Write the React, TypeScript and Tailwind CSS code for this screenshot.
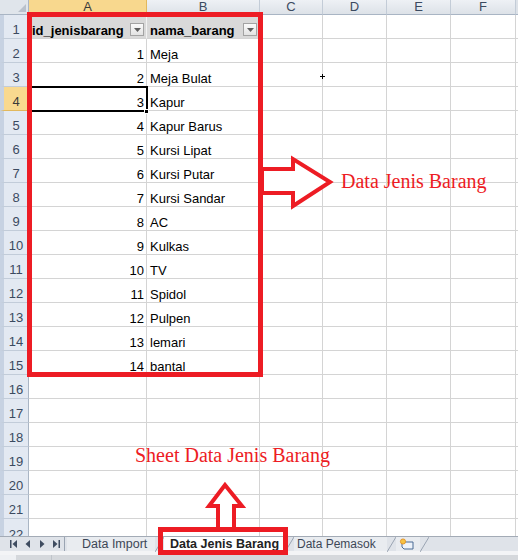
import React from "react";

const cols = [
  { id: "A", w: "w-[118px]" },
  { id: "B", w: "w-[113px]" },
  { id: "C", w: "w-[63px]" },
  { id: "D", w: "w-[64px]" },
  { id: "E", w: "w-[64px]" },
  { id: "F", w: "w-[65px]" },
];

const barang = [
  "Meja",
  "Meja Bulat",
  "Kapur",
  "Kapur Barus",
  "Kursi Lipat",
  "Kursi Putar",
  "Kursi Sandar",
  "AC",
  "Kulkas",
  "TV",
  "Spidol",
  "Pulpen",
  "lemari",
  "bantal",
];

const FilterButton = () => (
  <div className="absolute right-[2px] bottom-[2px] w-[14px] h-[13px] border border-[#a3a3a3] bg-gradient-to-b from-[#fafafa] to-[#e3e3e3] flex items-center justify-center">
    <svg width="7" height="4" viewBox="0 0 7 4">
      <path d="M0 0 H7 L3.5 4 Z" fill="#5f5f5f" />
    </svg>
  </div>
);

const RowHeader = ({ n, active }: { n: number; active?: boolean }) => (
  <div
    className={`w-[29px] h-[24px] shrink-0 border-l-[4px] border-l-[#c7d2e2] border-b border-r flex items-end justify-center pb-[1px] text-[13px] leading-[14px] ${
      active
        ? "bg-[#f9d98f] border-b-[#e2b85c] border-r-[#e2b85c] text-[#3a3a3a]"
        : "bg-[#e3e9f2] border-b-[#c2ccd9] border-r-[#a9b5c4] text-[#3b4a60]"
    }`}
  >
    {n}
  </div>
);

const RightArrow = () => (
  <svg className="absolute left-[258px] top-[154px]" width="80" height="58" viewBox="258 154 80 58">
    <polygon
      points="262,169 293,169 293,159 330,182 293,206 293,193 262,193"
      fill="white"
      stroke="#ed1c24"
      strokeWidth="4"
      strokeLinejoin="miter"
    />
  </svg>
);

const UpArrow = () => (
  <svg className="absolute left-[204px] top-[480px]" width="44" height="50" viewBox="204 480 44 50">
    <polygon
      points="225,485 242,506 234,506 234,530 218,530 218,506 209,506"
      fill="white"
      stroke="#ed1c24"
      strokeWidth="4"
    />
  </svg>
);

const NavButtons = () => (
  <div className="w-[64px] shrink-0 flex items-center pl-[10px] gap-[8px]">
    <svg width="7" height="8" viewBox="0 0 7 8">
      <rect x="0" y="0" width="1.5" height="8" fill="#3f4c60" />
      <path d="M7 0 V8 L2.5 4 Z" fill="#3f4c60" />
    </svg>
    <svg width="6" height="8" viewBox="0 0 6 8">
      <path d="M5 0 V8 L0.5 4 Z" fill="#3f4c60" />
    </svg>
    <svg width="6" height="8" viewBox="0 0 6 8">
      <path d="M1 0 V8 L5.5 4 Z" fill="#3f4c60" />
    </svg>
    <svg width="7" height="8" viewBox="0 0 7 8">
      <path d="M0 0 V8 L4.5 4 Z" fill="#3f4c60" />
      <rect x="5.5" y="0" width="1.5" height="8" fill="#3f4c60" />
    </svg>
  </div>
);

const Slant = () => (
  <svg width="9" height="15" viewBox="0 0 9 15" className="shrink-0">
    <path d="M0 15 L9 0" stroke="#9aa4b2" strokeWidth="1" />
  </svg>
);

export default function App() {
  return (
    <div className="relative w-[518px] h-[560px] overflow-hidden bg-white font-['Liberation_Sans',Arial,sans-serif]">
      {/* column headers */}
      <div className="flex h-[15px]">
        <div className="relative w-[29px] shrink-0 bg-[#e0e5eb] border-b border-r border-[#a9b5c4]">
          <svg className="absolute right-[2px] bottom-[2px]" width="8" height="8" viewBox="0 0 8 8">
            <path d="M8 0 V8 H0 Z" fill="#b9c1cc" />
          </svg>
        </div>
        {cols.map((c, i) => (
          <div
            key={c.id}
            className={`${c.w} shrink-0 border-b border-r flex items-center justify-center text-[13px] leading-[14px] ${
              i === 0
                ? "bg-[#f8d88e] border-b-[#e2b85c] border-r-[#e2b85c] text-[#3a3a3a]"
                : "bg-gradient-to-b from-[#eef1f5] to-[#dde2e8] border-b-[#a9b5c4] border-r-[#c3ccd7] text-[#3b4a60]"
            }`}
          >
            {c.id}
          </div>
        ))}
        <div className="flex-1 bg-[#dde2e8] border-b border-[#a9b5c4]" />
      </div>

      {/* row 1: table header */}
      <div className="flex">
        <RowHeader n={1} />
        <div className="relative w-[118px] shrink-0 h-[24px] bg-[#d9d9d9] border-b border-r border-b-[#d4d4d4] border-r-[#f2f2f2] flex items-end pl-[3px] text-[13px] leading-[14px] font-bold text-black">
          id_jenisbarang
          <FilterButton />
        </div>
        <div className="relative w-[113px] shrink-0 h-[24px] bg-[#d9d9d9] border-b border-r border-[#d4d4d4] flex items-end pl-[3px] text-[13px] leading-[14px] font-bold text-black">
          nama_barang
          <FilterButton />
        </div>
        {cols.slice(2).map((c) => (
          <div key={c.id} className={`${c.w} shrink-0 h-[24px] border-b border-r border-[#d4d4d4]`} />
        ))}
        <div className="flex-1 h-[24px] border-b border-[#d4d4d4]" />
      </div>

      {/* data rows */}
      {Array.from({ length: 20 }).map((_, i) => {
        const n = i + 2;
        const item = barang[i];
        return (
          <div key={n} className="flex">
            <RowHeader n={n} active={n === 4} />
            <div className="w-[118px] shrink-0 h-[24px] border-b border-r border-[#d4d4d4] flex items-end justify-end pr-[2px] text-[13px] leading-[14px] text-black">
              {item ? i + 1 : ""}
            </div>
            <div className="w-[113px] shrink-0 h-[24px] border-b border-r border-[#d4d4d4] flex items-end pl-[3px] text-[13px] leading-[14px] text-black">
              {item ?? ""}
            </div>
            {cols.slice(2).map((c) => (
              <div key={c.id} className={`${c.w} shrink-0 h-[24px] border-b border-r border-[#d4d4d4]`} />
            ))}
            <div className="flex-1 h-[24px] border-b border-[#d4d4d4]" />
          </div>
        );
      })}

      {/* row 22, partly visible */}
      <div className="flex h-[17px] overflow-hidden">
        <div className="w-[29px] shrink-0 h-[24px] border-l-[4px] border-l-[#c7d2e2] border-r border-r-[#a9b5c4] bg-[#e3e9f2] flex justify-center pt-[9px] text-[13px] leading-[14px] text-[#3b4a60]">
          22
        </div>
        <div className="w-[118px] shrink-0 border-r border-[#d4d4d4]" />
        <div className="w-[113px] shrink-0 border-r border-[#d4d4d4]" />
        {cols.slice(2).map((c) => (
          <div key={c.id} className={`${c.w} shrink-0 border-r border-[#d4d4d4]`} />
        ))}
      </div>

      {/* sheet tabs */}
      <div className="flex h-[15px] bg-[#dfe3e9] border-t border-[#a3abb6] text-[12.5px] leading-[14px] text-[#3d4756]">
        <NavButtons />
        <div className="w-[3px] shrink-0 border-l border-[#9aa4b2]" />
        <div className="flex items-center bg-[#e9ecf0] pl-[15px] pr-[5px] w-[88px] shrink-0">Data Import</div>
        <Slant />
        <div className="flex items-center justify-center bg-white font-bold text-[#222] w-[121px] shrink-0 border-b border-[#9aa4b2]">
          Data Jenis Barang
        </div>
        <Slant />
        <div className="flex items-center bg-[#e9ecf0] pl-[3px] w-[93px] shrink-0 text-[12px]">Data Pemasok</div>
        <Slant />
        <div className="flex items-center bg-[#e9ecf0] pl-[3px] w-[24px] shrink-0">
          <svg width="16" height="13" viewBox="0 0 16 13">
            <path d="M3 4 H14 V11 H5 L3 9 Z" fill="#eef3fa" stroke="#4a6b94" strokeWidth="1" />
            <circle cx="4" cy="3.5" r="2.6" fill="#f6c343" stroke="#e08a1e" strokeWidth="0.8" />
          </svg>
        </div>
        <Slant />
        <div className="flex-1" />
      </div>
      <div className="h-[4px] bg-[#f3f4f6]" />
      <div className="flex h-[5px]">
        <div className="w-[16px] bg-[#eef0f3]" />
        <div className="w-[36px] bg-[#d5d8dc] border-r border-[#bfc4ca]" />
        <div className="flex-1 bg-[#d5d8dc]" />
      </div>

      {/* selected cell A4 */}
      <div className="absolute left-[28px] top-[86px] w-[120px] h-[26px] border-2 border-black pointer-events-none" />
      <div className="absolute left-[144px] top-[109px] w-[5px] h-[5px] bg-black border border-white" />

      {/* cursor */}
      <div className="absolute left-[320px] top-[76px] w-[5px] h-[1px] bg-black" />
      <div className="absolute left-[322px] top-[74px] w-[1px] h-[5px] bg-black" />

      {/* annotations */}
      <div className="absolute left-[27px] top-[12px] w-[236px] h-[365px] border-[5px] border-[#ed1c24]" />
      <RightArrow />
      <div className="absolute left-[341px] top-[171px] text-[20px] leading-[20px] text-[#ed1c24] font-['Liberation_Serif','Times_New_Roman',serif] whitespace-nowrap">
        Data Jenis Barang
      </div>
      <div className="absolute left-[135px] top-[445px] text-[20px] leading-[20px] text-[#ed1c24] font-['Liberation_Serif','Times_New_Roman',serif] whitespace-nowrap">
        Sheet Data Jenis Barang
      </div>
      <UpArrow />
      <div className="absolute left-[158px] top-[527px] w-[130px] h-[28px] border-[5px] border-[#ed1c24]" />
    </div>
  );
}
